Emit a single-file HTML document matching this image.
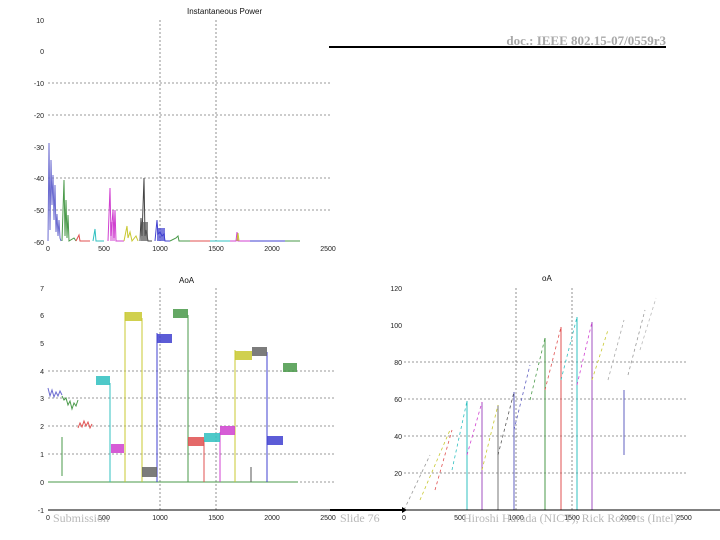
<!DOCTYPE html>
<html><head><meta charset="utf-8"><style>
html,body{margin:0;padding:0;background:#fff;width:720px;height:540px;overflow:hidden}
svg{display:block}
.ax{font-family:"Liberation Sans",sans-serif;font-size:7px;fill:#222}
.ti{font-family:"Liberation Sans",sans-serif;font-size:8px;fill:#111}
.ft{font-family:"Liberation Serif",serif;font-size:12px;fill:#b8b8b8}
</style></head><body>
<svg width="720" height="540" viewBox="0 0 720 540" xmlns="http://www.w3.org/2000/svg">
<text x="666" y="45" text-anchor="end" font-family="Liberation Serif,serif" font-weight="bold" font-size="13" fill="#a8a8a8">doc.: IEEE 802.15-07/0559r3</text>
<rect x="329" y="46" width="337" height="2" fill="#000"/>

<text class="ti" x="187" y="14">Instantaneous Power</text>
<g class="ax" text-anchor="end">
<text x="44" y="23">10</text><text x="44" y="54">0</text><text x="44" y="86">-10</text><text x="44" y="118">-20</text>
<text x="44" y="150">-30</text><text x="44" y="181">-40</text><text x="44" y="213">-50</text><text x="44" y="245">-60</text>
</g>
<g class="ax" text-anchor="middle">
<text x="48" y="251">0</text><text x="104" y="251">500</text><text x="160" y="251">1000</text><text x="216" y="251">1500</text><text x="272" y="251">2000</text><text x="328" y="251">2500</text>
</g>
<g stroke="#777" stroke-width="0.8" stroke-dasharray="2,2" fill="none">
<line x1="48" y1="83" x2="330" y2="83"/><line x1="48" y1="115" x2="330" y2="115"/>
<line x1="48" y1="178" x2="330" y2="178"/><line x1="48" y1="210" x2="330" y2="210"/>
<line x1="160" y1="20" x2="160" y2="241"/><line x1="216" y1="20" x2="216" y2="241"/>
</g>
<g fill="none" stroke-width="1">
<polyline stroke="#6b6bd0" points="48,241 49,143 50,230 51,160 52,205 53,175 54,220 55,185 56,232 57,214 58,236 59,220 60,238 61,241"/>
<polyline stroke="#4a9a4a" points="62,241 64,180 65,236 66,200 67,238 68,215 69,241 74,238 76,241"/>
<polyline stroke="#e05050" points="76,241 79,235 80,241 90,241"/>
<polyline stroke="#30c0c0" points="93,241 95,229 96,241 104,241"/>
<polyline stroke="#d040d0" points="108,241 110,188 111,236 113,210 114,238 115,210 116,241 124,241"/>
<polyline stroke="#c8c830" points="124,241 127,226 128,238 130,232 132,241 136,236 138,241"/>
<polyline stroke="#444" points="140,241 141,218 142,236 144,178 145,236 146,230 148,241 152,241"/>
<polyline stroke="#4040d0" points="155,241 157,220 158,234 160,232 162,236 164,234 165,241 170,241"/>
<polyline stroke="#4a9a4a" points="170,241 176,238 178,236 179,241 190,241"/>
<polyline stroke="#e05050" points="190,241 210,241"/>
<polyline stroke="#30c0c0" points="210,241 230,241"/>
<polyline stroke="#d040d0" points="230,241 236,241 237,232 238,241 250,241"/>
<polyline stroke="#c8c830" points="237,241 238,233 239,241"/>
<polyline stroke="#4040d0" points="250,241 285,241"/>
<polyline stroke="#4a9a4a" points="285,241 300,241"/>
</g>
<rect x="141" y="222" width="7" height="19" fill="#555" opacity="0.7"/>
<rect x="157" y="228" width="8" height="13" fill="#4040d0" opacity="0.7"/>
<rect x="110" y="222" width="5" height="19" fill="#d040d0" opacity="0.5"/>

<text class="ti" x="179" y="283">AoA</text>
<g class="ax" text-anchor="end">
<text x="44" y="291">7</text><text x="44" y="318">6</text><text x="44" y="346">5</text><text x="44" y="374">4</text>
<text x="44" y="401">3</text><text x="44" y="429">2</text><text x="44" y="457">1</text><text x="44" y="485">0</text><text x="44" y="513">-1</text>
</g>
<g class="ax" text-anchor="middle">
<text x="48" y="520">0</text><text x="104" y="520">500</text><text x="160" y="520">1000</text><text x="216" y="520">1500</text><text x="272" y="520">2000</text><text x="328" y="520">2500</text>
</g>
<g stroke="#777" stroke-width="0.8" stroke-dasharray="2,2" fill="none">
<line x1="48" y1="371" x2="335" y2="371"/><line x1="48" y1="398" x2="335" y2="398"/>
<line x1="48" y1="426" x2="335" y2="426"/><line x1="48" y1="454" x2="335" y2="454"/>
<line x1="48" y1="482" x2="335" y2="482"/>
<line x1="160" y1="288" x2="160" y2="510"/><line x1="216" y1="288" x2="216" y2="510"/>
</g>
<g fill="none" stroke-width="1">
<line x1="48" y1="482" x2="298" y2="482" stroke="#4a9a4a"/>
<line x1="62" y1="437" x2="62" y2="476" stroke="#4a9a4a"/>
<line x1="110" y1="383" x2="110" y2="482" stroke="#30c0c0"/>
<line x1="125" y1="312" x2="125" y2="482" stroke="#c8c830"/>
<line x1="142" y1="318" x2="142" y2="482" stroke="#c8c830"/>
<line x1="157" y1="333" x2="157" y2="482" stroke="#4040d0"/>
<line x1="188" y1="315" x2="188" y2="482" stroke="#4a9a4a"/>
<line x1="204" y1="440" x2="204" y2="482" stroke="#e05050"/>
<line x1="220" y1="432" x2="220" y2="482" stroke="#d040d0"/>
<line x1="235" y1="350" x2="235" y2="482" stroke="#c8c830"/>
<line x1="267" y1="352" x2="267" y2="482" stroke="#4040d0"/>
<line x1="251" y1="467" x2="251" y2="482" stroke="#555"/>
<polyline stroke="#6b6bd0" points="48,388 50,396 52,390 54,397 56,392 58,396 60,391 62,395"/>
<polyline stroke="#4a9a4a" points="62,396 64,400 66,398 68,405 70,401 72,409 74,403 76,406 78,400"/>
<polyline stroke="#e05050" points="78,428 80,423 82,427 84,421 86,426 88,422 90,428 92,424"/>
</g>
<g opacity="0.85">
<rect x="96" y="376" width="14" height="9" fill="#30c0c0"/>
<rect x="111" y="444" width="13" height="9" fill="#d040d0"/>
<rect x="125" y="312" width="17" height="9" fill="#c8c830"/>
<rect x="142" y="467" width="15" height="10" fill="#666"/>
<rect x="157" y="334" width="15" height="9" fill="#4040d0"/>
<rect x="173" y="309" width="15" height="9" fill="#4a9a4a"/>
<rect x="188" y="437" width="16" height="9" fill="#e05050"/>
<rect x="204" y="433" width="16" height="9" fill="#30c0c0"/>
<rect x="220" y="426" width="15" height="9" fill="#d040d0"/>
<rect x="235" y="351" width="17" height="9" fill="#c8c830"/>
<rect x="252" y="347" width="15" height="9" fill="#666"/>
<rect x="267" y="436" width="16" height="9" fill="#4040d0"/>
<rect x="283" y="363" width="14" height="9" fill="#4a9a4a"/>
</g>

<text class="ti" x="542" y="281">oA</text>
<g class="ax" text-anchor="end">
<text x="402" y="291">120</text><text x="402" y="328">100</text><text x="402" y="365">80</text><text x="402" y="402">60</text>
<text x="402" y="439">40</text><text x="402" y="476">20</text>
</g>
<g class="ax" text-anchor="middle">
<text x="404" y="520">0</text><text x="460" y="520">500</text><text x="516" y="520">1000</text><text x="572" y="520">1500</text><text x="628" y="520">2000</text><text x="684" y="520">2500</text>
</g>
<g stroke="#777" stroke-width="0.8" stroke-dasharray="2,2" fill="none">
<line x1="404" y1="362" x2="686" y2="362"/><line x1="404" y1="399" x2="686" y2="399"/>
<line x1="404" y1="436" x2="686" y2="436"/><line x1="404" y1="473" x2="686" y2="473"/>
<line x1="516" y1="288" x2="516" y2="510"/><line x1="572" y1="288" x2="572" y2="510"/>
</g>
<g fill="none" stroke-width="1">
<line x1="467" y1="401" x2="467" y2="510" stroke="#30c0c0"/>
<line x1="482" y1="402" x2="482" y2="510" stroke="#a050c0"/>
<line x1="498" y1="405" x2="498" y2="510" stroke="#777"/>
<line x1="514" y1="392" x2="514" y2="510" stroke="#6060c0"/>
<line x1="545" y1="338" x2="545" y2="510" stroke="#4a9a4a"/>
<line x1="561" y1="327" x2="561" y2="510" stroke="#e05050"/>
<line x1="577" y1="317" x2="577" y2="510" stroke="#30c0c0"/>
<line x1="592" y1="322" x2="592" y2="510" stroke="#a050c0"/>
<line x1="624" y1="390" x2="624" y2="455" stroke="#6060c0"/>
</g>
<g fill="none" stroke-width="0.8" stroke-dasharray="3,3">
<line x1="404" y1="510" x2="430" y2="455" stroke="#999"/>
<line x1="420" y1="500" x2="450" y2="430" stroke="#c8c830"/>
<line x1="435" y1="490" x2="452" y2="430" stroke="#e05050"/>
<line x1="452" y1="470" x2="467" y2="401" stroke="#30c0c0"/>
<line x1="467" y1="455" x2="482" y2="402" stroke="#d040d0"/>
<line x1="482" y1="470" x2="498" y2="405" stroke="#c8c830"/>
<line x1="498" y1="455" x2="514" y2="392" stroke="#555"/>
<line x1="514" y1="430" x2="530" y2="365" stroke="#6060c0"/>
<line x1="530" y1="400" x2="545" y2="338" stroke="#4a9a4a"/>
<line x1="545" y1="390" x2="561" y2="327" stroke="#e05050"/>
<line x1="561" y1="380" x2="577" y2="317" stroke="#30c0c0"/>
<line x1="577" y1="385" x2="592" y2="322" stroke="#d040d0"/>
<line x1="592" y1="380" x2="608" y2="330" stroke="#c8c830"/>
<line x1="608" y1="380" x2="624" y2="320" stroke="#aaa"/>
<line x1="628" y1="375" x2="645" y2="310" stroke="#999"/>
<line x1="640" y1="350" x2="656" y2="298" stroke="#bbb"/>
</g>

<line x1="48" y1="510" x2="720" y2="510" stroke="#000" stroke-width="1"/>
<rect x="330" y="509" width="72" height="2" fill="#000"/>
<polygon points="402,507 407,510 402,513" fill="#000"/>
<text class="ft" x="53" y="522">Submission</text>
<text class="ft" x="340" y="522">Slide 76</text>
<text class="ft" x="463" y="522">Hiroshi Harada (NICT), Rick Roberts (Intel)</text>
</svg>
</body></html>
